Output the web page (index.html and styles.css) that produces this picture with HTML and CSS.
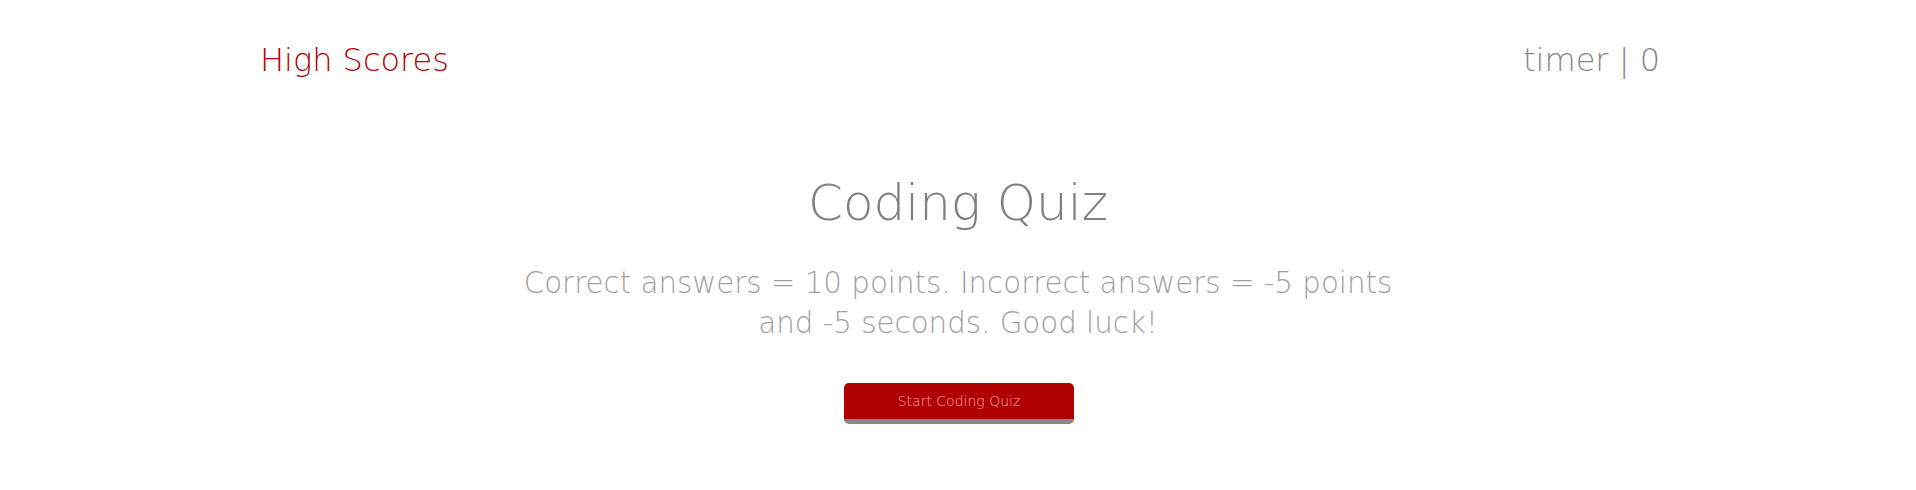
FILE: index.html
```html
<!DOCTYPE html>
<html lang="en">
<head>
<meta charset="utf-8">
<title>Coding Quiz</title>
<link rel="stylesheet" href="styles.css">
</head>
<body>
<header class="top-bar">
  <a class="high-scores" href="#">High Scores</a>
  <div class="timer">timer | <span class="time">0</span></div>
</header>
<main class="intro">
  <h1 class="title">Coding Quiz</h1>
  <p class="rules">Correct answers = 10 points. Incorrect answers = -5 points and -5 seconds. Good luck!</p>
  <button class="start-btn" type="button">Start Coding Quiz</button>
</main>
</body>
</html>
```
FILE: styles.css
```css
html, body {
  margin: 0;
  padding: 0;
  background: #ffffff;
}
body {
  font-family: "DejaVu Sans", "Noto Sans", sans-serif;
  font-weight: 200;
}
.top-bar {
  display: flex;
  justify-content: space-between;
  align-items: baseline;
  padding: 41px 256px 0 260px;
  font-size: 32px;
  line-height: 38px;
}
.high-scores {
  color: #b00000;
  text-decoration: none;
}
.timer {
  color: #888888;
}
.intro {
  display: flex;
  flex-direction: column;
  align-items: center;
  margin-top: 94px;
}
.title {
  margin: 0;
  font-size: 50px;
  line-height: 60px;
  font-weight: 200;
  color: #808080;
}
.rules {
  margin: 30px 0 0;
  max-width: 910px;
  text-align: center;
  font-size: 29.3px;
  line-height: 40px;
  color: #a0a0a0;
}
.start-btn {
  -webkit-appearance: none;
  appearance: none;
  display: block;
  box-sizing: border-box;
  margin: 40px 0 0 2px;
  width: 230px;
  height: 41px;
  padding: 0;
  border: 0;
  border-bottom: 5px solid #888888;
  border-radius: 5px;
  background-color: #b00000;
  color: #f0a8b0;
  font-family: "DejaVu Sans", "Noto Sans", sans-serif;
  font-weight: 200;
  font-size: 14px;
  cursor: pointer;
}
```
